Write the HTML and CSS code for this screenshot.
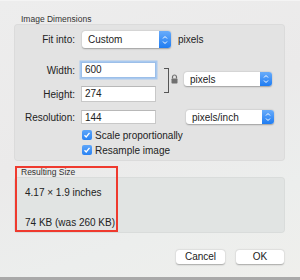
FILE: index.html
```html
<!DOCTYPE html>
<html lang="en">
<head>
  <meta charset="UTF-8" />
  <title>Adjust Size</title>
  <link rel="stylesheet" href="styles.css">
</head>
<body>
  <div class="window">
    <div class="group-title">Image Dimensions</div>
    <div class="group dims">
      <div class="row fit-row">
        <span class="label">Fit into:</span>
        <div class="popup fit-popup">
          <span class="popup-text">Custom</span>
          <span class="stepper">
            <svg width="6" height="10" viewBox="0 0 6 10"><path d="M1 3.5 L3 1.5 L5 3.5 M1 6.5 L3 8.5 L5 6.5" fill="none" stroke="#fff" stroke-width="1"/></svg>
          </span>
        </div>
        <span class="unit">pixels</span>
      </div>

      <div class="wh">
        <div class="wh-fields">
          <div class="row">
            <span class="label">Width:</span>
            <div class="field focus">600</div>
          </div>
          <div class="row">
            <span class="label">Height:</span>
            <div class="field">274</div>
          </div>
        </div>
        <div class="bracket"></div>
        <svg class="lock" width="7" height="10" viewBox="0 0 7 10">
          <path d="M1.5 4.5 V3 A2 2 0 0 1 5.5 3 V4.5" fill="none" stroke="#707070" stroke-width="1.2"/>
          <rect x="0.5" y="4.5" width="6" height="5" rx="0.8" fill="#707070"/>
        </svg>
        <div class="popup unit-popup wh-popup">
          <span class="popup-text">pixels</span>
          <span class="stepper">
            <svg width="6" height="10" viewBox="0 0 6 10"><path d="M1 3.5 L3 1.5 L5 3.5 M1 6.5 L3 8.5 L5 6.5" fill="none" stroke="#fff" stroke-width="1"/></svg>
          </span>
        </div>
      </div>

      <div class="row res-row">
        <span class="label">Resolution:</span>
        <div class="field">144</div>
        <div class="popup unit-popup res-popup">
          <span class="popup-text">pixels/inch</span>
          <span class="stepper">
            <svg width="6" height="10" viewBox="0 0 6 10"><path d="M1 3.5 L3 1.5 L5 3.5 M1 6.5 L3 8.5 L5 6.5" fill="none" stroke="#fff" stroke-width="1"/></svg>
          </span>
        </div>
      </div>

      <div class="checks">
        <div class="check">
          <span class="box"><svg width="8" height="8" viewBox="0 0 8 8"><path d="M1.5 4.2 L3.2 6 L6.5 1.8" fill="none" stroke="#fff" stroke-width="1.3"/></svg></span>
          <span>Scale proportionally</span>
        </div>
        <div class="check">
          <span class="box"><svg width="8" height="8" viewBox="0 0 8 8"><path d="M1.5 4.2 L3.2 6 L6.5 1.8" fill="none" stroke="#fff" stroke-width="1.3"/></svg></span>
          <span>Resample image</span>
        </div>
      </div>
    </div>

    <div class="result">
      <div class="group-title result-title">Resulting Size</div>
      <div class="group result-box">
        <div class="result-line">4.17 × 1.9 inches</div>
        <div class="result-line">74 KB (was 260 KB)</div>
      </div>
      <div class="highlight"></div>
    </div>

    <div class="buttons">
      <div class="btn cancel">Cancel</div>
      <div class="btn ok">OK</div>
    </div>
  </div>
</body>
</html>
```

FILE: styles.css
```css
* {
  box-sizing: border-box;
}

body {
  margin: 0;
  padding: 0;
  background: #ececec;
}

.window {
  width: 300px;
  height: 280px;
  overflow: hidden;
  padding-top: 14px;
  background: linear-gradient(160deg, #ededed 0%, #ebeaea 45%, #eceeed 75%, #efefec 100%);
  border-top: 1px solid #f4f4f4;
  border-bottom: 3px solid #a9a9a9;
  font-family: "Liberation Sans", Arial, sans-serif;
  font-size: 10px;
  color: #222;
  position: relative;
}

.group-title {
  font-size: 8.5px;
  line-height: 10px;
  height: 10px;
  padding-left: 21px;
  margin-top: -1px;
  color: #333;
}

.group {
  margin: 0 15px 0 14px;
  background: #e3e3e3;
  border-radius: 4px;
  border: 1px solid rgba(0, 0, 0, 0.03);
}

.dims {
  height: 137px;
  padding-top: 6px;
}

.row {
  display: flex;
  align-items: center;
  height: 16px;
}

.label {
  width: 60px;
  text-align: right;
  margin-right: 6px;
  flex: none;
}

.fit-row {
  height: 17px;
}

.fit-row .label {
  margin-right: 7px;
}

.popup {
  display: flex;
  align-items: center;
  background: #fff;
  border-radius: 3px;
  box-shadow: 0 0.5px 1.5px rgba(0, 0, 0, 0.3);
  height: 100%;
  overflow: hidden;
}

.popup-text {
  flex: 1;
  padding-left: 6px;
}

.stepper {
  width: 12px;
  height: 100%;
  display: flex;
  align-items: center;
  justify-content: center;
  background: linear-gradient(#69acfa, #1f7cf2);
}

.fit-popup {
  width: 89px;
}

.unit {
  margin-left: 7px;
}

.field {
  width: 75px;
  height: 100%;
  background: #fff;
  border: 1px solid #c8c8c8;
  border-top-color: #b8b8b8;
  padding-left: 3px;
  line-height: 14px;
}

.field.focus {
  border-color: #9cbfe9;
  box-shadow: 0 0 0 1.5px #a9c9ef;
}

.wh {
  display: flex;
  align-items: flex-start;
  margin-top: 14px;
}

.wh-fields {
  display: flex;
  flex-direction: column;
  gap: 8px;
}

.bracket {
  width: 5px;
  height: 25px;
  margin: 6px 0 0 8px;
  border: 1px solid #555;
  border-left: none;
}

.lock {
  margin: 12px 0 0 2px;
}

.unit-popup {
  width: 88px;
  margin-left: 6px;
}

.wh-popup {
  height: 14px;
  margin-top: 10px;
}

.res-row {
  margin-top: 8px;
  height: 14px;
}

.res-popup {
  margin-left: 30px;
}

.checks {
  display: flex;
  flex-direction: column;
  gap: 5px;
  margin-top: 6px;
  padding-left: 67px;
}

.check {
  display: flex;
  align-items: center;
  gap: 3px;
  height: 10px;
}

.box {
  width: 10px;
  height: 10px;
  border-radius: 2px;
  background: linear-gradient(#5ea6fa, #2a83f3);
  display: flex;
  align-items: center;
  justify-content: center;
}

.result {
  position: relative;
  margin-top: 6px;
}

.result-title {
  margin-top: 0;
}

.result-box {
  height: 56px;
  background: #e1e4e3;
  padding: 9px 0 0 10px;
}

.result-line {
  line-height: 11px;
  height: 30px;
}

.highlight {
  position: absolute;
  left: 15px;
  top: -1px;
  width: 103px;
  height: 66px;
  border: 2px solid #ef3a2e;
}

.buttons {
  display: flex;
  justify-content: flex-end;
  gap: 11px;
  margin-top: 17px;
  padding-right: 16px;
}

.btn {
  height: 14px;
  line-height: 14px;
  text-align: center;
  background: #fff;
  border-radius: 3px;
  box-shadow: 0 0.5px 1.5px rgba(0, 0, 0, 0.3);
}

.cancel {
  width: 49px;
}

.ok {
  width: 48px;
}
```
